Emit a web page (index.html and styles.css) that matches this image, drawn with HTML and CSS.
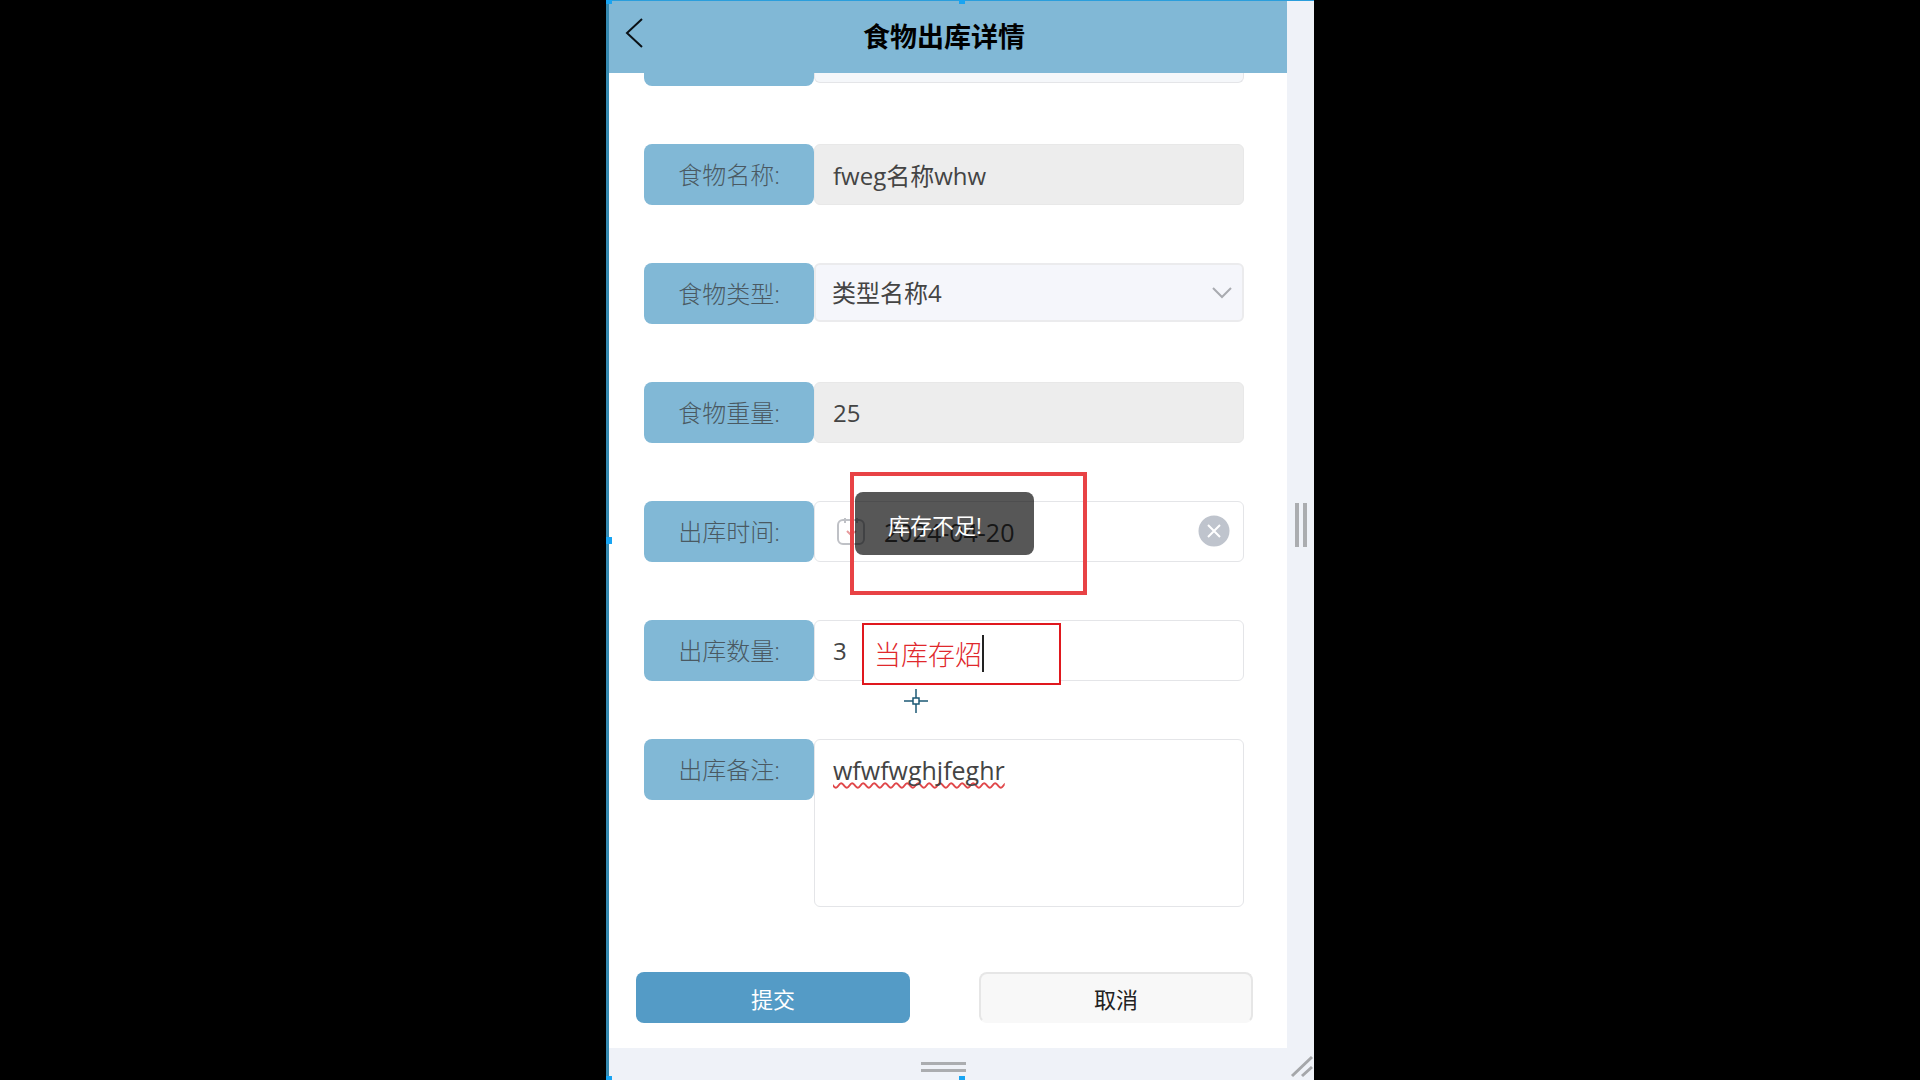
FILE: index.html
```html
<!DOCTYPE html>
<html lang="zh-CN">
<head>
<meta charset="utf-8">
<meta name="viewport" content="width=device-width, initial-scale=1">
<title>食物出库详情</title>
<link rel="stylesheet" href="styles.css">
</head>
<body>
<div class="frame">
  <div class="page">
    <header class="header">
      <button class="back" type="button" aria-label="返回">
        <svg width="18" height="30" viewBox="0 0 18 30" fill="none" stroke="#0b1116" stroke-width="2"><path d="M17 1 2 15l15 14"/></svg>
      </button>
      <h1 class="title">食物出库详情</h1>
    </header>
    <form class="form">
      <div class="row row-cut">
        <div class="label-cut"></div>
        <div class="field-cut"></div>
      </div>
      <div class="row">
        <label class="label" for="name">食物名称:</label>
        <input class="field field-off" id="name" type="text" value="fweg名称whw" readonly>
      </div>
      <div class="row">
        <label class="label" for="kind">食物类型:</label>
        <div class="wrap">
          <select class="field field-select" id="kind"><option>类型名称4</option></select>
          <svg class="chevron" width="20" height="12" viewBox="0 0 20 12" fill="none" stroke="#a9abb0" stroke-width="2"><path d="m1 1 9 9 9-9"/></svg>
        </div>
      </div>
      <div class="row">
        <label class="label" for="weight">食物重量:</label>
        <input class="field field-off" id="weight" type="text" value="25" readonly>
      </div>
      <div class="row">
        <label class="label" for="date">出库时间:</label>
        <div class="wrap">
          <svg class="calendar" width="30" height="30" viewBox="0 0 30 30" fill="none" stroke="#bfc1c6" stroke-width="2"><rect x="2" y="3" width="26" height="24" rx="5"/><path d="M9 1v5M21 1v5"/><path d="m11 14 4 4 5-4" stroke="#e79a9c"/></svg>
          <input class="field field-date" id="date" type="text" value="2024-04-20">
          <button class="clear" type="button" aria-label="清除">
            <svg width="32" height="32" viewBox="0 0 32 32"><circle cx="16" cy="16" r="15.500" fill="#bfc4cd"/><path d="m10 10 12 12M22 10 10 22" stroke="#fff" stroke-width="2"/></svg>
          </button>
        </div>
      </div>
      <div class="row">
        <label class="label" for="count">出库数量:</label>
        <input class="field" id="count" type="text" value="3">
      </div>
      <div class="row">
        <label class="label" for="note">出库备注:</label>
        <textarea class="field field-note" id="note" spellcheck="false">wfwfwghjfeghr</textarea>
      </div>
      <div class="actions">
        <button class="btn btn-submit" type="button">提交</button>
        <button class="btn btn-cancel" type="button">取消</button>
      </div>
    </form>
  </div>
  <div class="side"><span class="grip grip-v"></span></div>
  <div class="bottom"><span class="grip grip-h"></span></div>
  <svg class="corner" width="24" height="24" viewBox="0 0 24 24" stroke="#a5a7aa" stroke-width="3"><path d="M2 22 22 3M12 22l10-9"/></svg>

  <div class="mark mark-toast"></div>
  <div class="toast" role="status">库存不足!</div>
  <div class="mark mark-text">当库存炤<span class="caret"></span></div>
  <svg class="cross" width="24" height="24" viewBox="0 0 24 24" fill="none" stroke="#1d5a76" stroke-width="1.500"><path d="M12 0v9M12 15v9M0 12h9M15 12h9M9 9h6v6H9z"/></svg>
  <i class="handle handle-tl"></i>
  <i class="handle handle-tc"></i>
  <i class="handle handle-ml"></i>
  <i class="handle handle-bl"></i>
  <i class="handle handle-bc"></i>
</div>
</body>
</html>
```
FILE: styles.css
```css
* { box-sizing: border-box; }

body {
  margin: 0;
  background: #000;
  color: #444;
  font-family: "Open Sans", "Noto Sans CJK SC", sans-serif;
  font-size: 24px;
}

button, input, select, textarea { font: inherit; color: inherit; margin: 0; }
button { padding: 0; border: 0; background: none; }

.frame {
  position: relative;
  display: grid;
  grid-template-columns: 1fr 27px;
  grid-template-rows: 1fr 32px;
  width: 100%;
  max-width: 708px;
  min-height: 100vh;
  margin: 0 auto;
  background: #eff2f8;
  border-left: 3px solid #3589b0;
  border-top: 1px solid #2a9edc;
}

.page { background: #fff; }

.header {
  display: grid;
  grid-template-columns: 48px 1fr 66px;
  align-items: center;
  height: 72px;
  padding-left: 10px;
  background: #81b8d6;
}
.back { display: flex; justify-content: center; width: 30px; padding-bottom: 8px; }
.title {
  margin: 0;
  font-size: 27px;
  line-height: 40px;
  text-align: center;
  color: #000;
}

.form {
  display: flex;
  flex-direction: column;
  gap: 58px;
}
.row {
  display: grid;
  grid-template-columns: 170px 1fr;
  align-items: start;
  padding: 0 43px 0 35px;
}
.label-cut {
  height: 13px;
  border-radius: 0 0 8px 8px;
  background: #81b8d6;
}
.field-cut {
  height: 10px;
  border: 1px solid #e4e5e8;
  border-top: 0;
  border-radius: 0 0 6px 6px;
  background: #f5f7fa;
}
.label {
  height: 61px;
  border-radius: 8px;
  background: #81b8d6;
  color: #4a5962;
  font-weight: 300;
  line-height: 62px;
  text-align: center;
}
.field {
  display: block;
  width: 100%;
  height: 61px;
  padding: 0 18px;
  border: 1px solid #e4e5e8;
  border-radius: 6px;
  background: #fff;
  outline: 0;
}
.field-off { background: #ededed; border-color: #e8e8e8; }
.wrap { position: relative; }
.field-select {
  height: 59px;
  appearance: none;
  border: 2px solid #ebebed;
  padding: 0 16px;
  background: #f5f6fb;
}
.chevron { position: absolute; right: 12px; top: 24px; }
.field-date { padding-left: 69px; font-size: 25px; }
.calendar { position: absolute; left: 22px; top: 16px; }
.clear { position: absolute; right: 14px; top: 14px; display: flex; }
.field-note {
  height: 168px;
  padding: 12px 18px;
  font-size: 25px;
  line-height: 36px;
  resize: none;
  text-decoration: underline wavy #e0474a 2px;
  text-decoration-skip-ink: none;
  text-underline-offset: 2px;
}

.actions {
  display: grid;
  grid-template-columns: 1fr 1fr;
  gap: 69px;
  padding: 7px 34px 24px 27px;
}
.btn {
  height: 51px;
  border-radius: 8px;
  font-size: 22px;
}
.btn-submit { background: #549bc6; color: #fff; }
.btn-cancel {
  border: 2px solid #e6e6e6;
  border-bottom-color: #f8f8f8;
  background: #f8f8f8;
  color: #222;
}

.side { display: flex; align-items: center; justify-content: center; }
.bottom { display: flex; align-items: flex-end; justify-content: center; padding: 0 10px 8px 0; }
.grip-v {
  width: 12px;
  height: 44px;
  border: solid #abadb0;
  border-width: 0 4px;
}
.grip-h {
  width: 45px;
  height: 10px;
  border: solid #abadb0;
  border-width: 3px 0;
}
.corner { position: absolute; right: 0; bottom: 2px; }

/* Annotations drawn over the form */
.toast {
  position: absolute;
  left: 246px;
  top: 491px;
  width: 179px;
  height: 63px;
  padding-left: 33px;
  border-radius: 8px;
  background: rgba(0, 0, 0, .66);
  color: #fff;
  font-size: 22px;
  line-height: 66px;
}
.mark { position: absolute; border: 4px solid #e84245; }
.mark-toast { left: 241px; top: 471px; width: 237px; height: 123px; }
.mark-text {
  display: flex;
  align-items: center;
  left: 253px;
  top: 622px;
  width: 199px;
  height: 62px;
  padding: 0 0 2px 10px;
  border: 2px solid #e0181e;
  background: #fff;
  color: #e0282c;
  font-size: 27px;
  font-weight: 300;
}
.caret { width: 2px; height: 37px; background: #222; }
.cross { position: absolute; left: 295px; top: 688px; }

.handle { position: absolute; width: 6px; height: 4px; background: #18a4f2; }
.handle-tl { left: -3px; top: -1px; }
.handle-tc { left: 350px; top: -1px; }
.handle-ml { left: -3px; top: 536px; height: 7px; }
.handle-bl { left: -3px; bottom: 0; }
.handle-bc { left: 350px; bottom: 0; }
```
